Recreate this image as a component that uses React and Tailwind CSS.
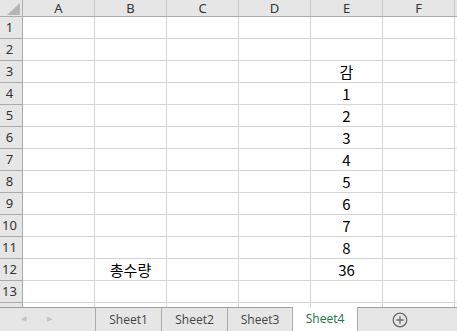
import { useState } from 'react';

const cols = ['A', 'B', 'C', 'D', 'E', 'F'];

// cell values by row number
const cells = {
    3: { E: '감' },
    4: { E: '1' },
    5: { E: '2' },
    6: { E: '3' },
    7: { E: '4' },
    8: { E: '5' },
    9: { E: '6' },
    10: { E: '7' },
    11: { E: '8' },
    12: { B: '총수량', E: '36' },
};

const rows = Array.from({ length: 13 }, (_, i) => i + 1);
const sheets = ['Sheet1', 'Sheet2', 'Sheet3', 'Sheet4'];

const cellFont = { fontFamily: '"Noto Sans CJK KR", "Noto Sans", sans-serif' };
const headFont = { fontFamily: '"Noto Sans", "Open Sans", sans-serif' };

function PlusIcon() {
    return (
        <svg width="16" height="16" viewBox="0 0 16 16" fill="none">
            <circle cx="8" cy="8" r="6.8" stroke="#6b6b6b" strokeWidth="1.3" />
            <path d="M8 4.3v7.4M4.3 8h7.4" stroke="#6b6b6b" strokeWidth="1.4" />
        </svg>
    );
}

export default function App() {
    const [active, setActive] = useState('Sheet4');

    return (
        <div className="w-[457px] h-[331px] overflow-hidden bg-white flex flex-col select-none">
            {/* column headers */}
            <div className="flex h-[17px] shrink-0 bg-[#e6e6e6] border-b border-[#ababab]">
                <div className="w-[23px] shrink-0 border-r border-[#ababab] relative">
                    <svg className="absolute left-[7px] top-[3px]" width="13" height="12" viewBox="0 0 13 12">
                        <polygon points="13,0 13,12 0,12" fill="#b5b5b5" />
                    </svg>
                </div>
                {cols.map((c) => (
                    <div
                        key={c}
                        className="w-[72px] shrink-0 border-r border-[#c6c6c6] text-center text-[13px] leading-[16px] text-[#333]"
                        style={headFont}
                    >
                        {c}
                    </div>
                ))}
                <div className="flex-1" />
            </div>

            {/* rows */}
            {rows.map((r) => (
                <div key={r} className="flex h-[22px] shrink-0">
                    <div
                        className="w-[23px] shrink-0 bg-[#e6e6e6] border-r border-b border-[#ababab] text-center pr-[3px] text-[13px] leading-[21px] text-[#333]"
                        style={headFont}
                    >
                        {r}
                    </div>
                    {cols.map((c) => (
                        <div
                            key={c}
                            className="w-[72px] shrink-0 border-r border-b border-[#d4d4d4] text-center text-[15px] leading-[21px] text-black"
                            style={cellFont}
                        >
                            {cells[r]?.[c] ?? ''}
                        </div>
                    ))}
                    <div className="flex-1 border-b border-[#d4d4d4]" />
                </div>
            ))}

            {/* partial row 14 */}
            <div className="flex flex-1 min-h-0">
                <div className="w-[23px] shrink-0 bg-[#e6e6e6] border-r border-[#ababab]" />
                {cols.map((c) => (
                    <div key={c} className="w-[72px] shrink-0 border-r border-[#d4d4d4]" />
                ))}
            </div>

            {/* sheet tabs */}
            <div
                className="flex h-[24px] shrink-0 bg-[#e6e6e6] border-t border-[#9e9e9e] text-[12px]"
                style={{ fontFamily: '"Open Sans", "Noto Sans", sans-serif' }}
            >
                <div className="w-[96px] shrink-0 flex items-center border-r border-[#ababab] text-[#c2c2c2] text-[7px]">
                    <span className="ml-[21px]">◀</span>
                    <span className="ml-[21px]">▶</span>
                </div>
                {sheets.map((s) => {
                    const isActive = s === active;
                    const w = s === 'Sheet1' || s === 'Sheet2' ? 'w-[66px]' : 'w-[65px]';
                    return (
                        <button
                            key={s}
                            onClick={() => setActive(s)}
                            className={
                                isActive
                                    ? `${w} shrink-0 -mt-px h-[24px] bg-white border-r border-[#ababab] text-[#217346] flex items-center justify-center`
                                    : `${w} shrink-0 border-r border-[#ababab] text-[#444] flex items-center justify-center`
                            }
                        >
                            {s}
                        </button>
                    );
                })}
                <div className="flex-1 flex items-center pl-[34px]">
                    <PlusIcon />
                </div>
            </div>
        </div>
    );
}
